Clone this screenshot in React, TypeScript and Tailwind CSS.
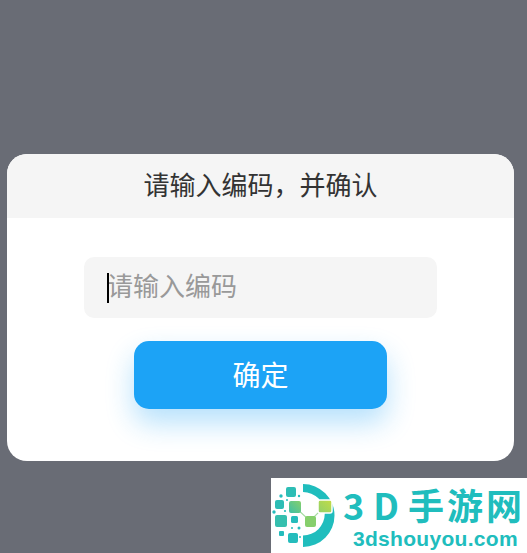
const cjk = "font-['Noto_Sans_CJK_SC','Noto_Sans',sans-serif]";

function Logo() {
  return (
    <svg width="70" height="75" viewBox="0 0 70 75" className="shrink-0">
      <defs>
        <linearGradient id="g1" x1="0" y1="1" x2="1" y2="0">
          <stop offset="0" stopColor="#3fbfa6" />
          <stop offset="1" stopColor="#86cf6c" />
        </linearGradient>
        <linearGradient id="g2" x1="0" y1="1" x2="1" y2="0">
          <stop offset="0" stopColor="#8fd06a" />
          <stop offset="1" stopColor="#c4dc45" />
        </linearGradient>
      </defs>
      <path d="M32 6A31.5 31.5 0 0 1 32 69V57.5A20 20 0 0 0 32 14Z" fill="#20bdbd" />
      <path d="M24 29L39 43L54 28" fill="none" stroke="#a5dca0" strokeWidth="1.2" />
      <rect x="15" y="9" width="10" height="10" rx="2" fill="#2dbdb5" />
      <rect x="4" y="22" width="9" height="9" rx="2" fill="#2dbdb5" />
      <rect x="18" y="23" width="12" height="12" rx="2" fill="url(#g1)" />
      <rect x="47" y="22" width="14" height="13" rx="2" stroke="#fff" strokeWidth="1.5" fill="url(#g2)" />
      <rect x="4" y="37" width="12" height="12" rx="2" fill="#35bfae" />
      <rect x="20" y="38" width="7" height="7" rx="1.5" fill="#25bcbc" />
      <rect x="34" y="38" width="11" height="11" rx="2" fill="#86cf6c" />
      <rect x="17" y="55" width="10" height="10" rx="2" fill="#25bcbc" />
      <rect x="8" y="53" width="5" height="5" rx="1" fill="#25bcbc" />
      <circle cx="10" cy="18" r="1.7" fill="#25bcbc" />
      <circle cx="28" cy="18" r="1.2" fill="#25bcbc" />
      <circle cx="16" cy="22" r="1" fill="#25bcbc" />
      <circle cx="3" cy="34" r="1.7" fill="#25bcbc" />
      <circle cx="14" cy="33" r="1.1" fill="#25bcbc" />
      <circle cx="21" cy="50" r="1" fill="#25bcbc" />
      <circle cx="28" cy="50" r="1.5" fill="#25bcbc" />
      <circle cx="29" cy="59" r="1" fill="#25bcbc" />
    </svg>
  );
}

export default function App() {
  return (
    <div className={`relative h-[553px] w-[527px] overflow-hidden bg-[#696c75] pt-[154px] pl-[7px] pr-[13px] ${cjk}`}>
      <div className="h-[307px] overflow-hidden rounded-[20px] bg-white">
        <div className="flex h-16 items-center justify-center bg-[#f5f5f5] pb-1.5 text-[26px] text-[#333]">
          请输入编码，并确认
        </div>
        <div className="flex flex-col items-center pt-[39px]">
          <div className="relative h-[61px] w-[353px]">
            <input
              placeholder="请输入编码"
              className="h-full w-full rounded-[10px] bg-[#f5f5f5] pb-1.5 pl-[23px] text-[26px] outline-none placeholder:text-[#999]"
            />
            <span className="absolute left-[23px] top-4 h-[30px] w-[1.5px] bg-black" />
          </div>
          <button className="mt-[23px] h-[68px] w-[253px] rounded-[15px] bg-[#1ca3f6] pb-0.5 text-[28px] text-white shadow-[0_14px_28px_rgba(28,163,246,0.32)]">
            确定
          </button>
        </div>
      </div>

      <div className="absolute bottom-0 left-[271px] flex h-[75px] w-[256px] bg-white">
        <Logo />
        <div className="flex flex-col items-start pl-0.5 pt-0.5 text-[#20bdbd]">
          <div className="whitespace-nowrap text-[36px] font-bold leading-[48px] tracking-[3px]">
            <span className="tracking-[9px]">3D</span>手游网
          </div>
          <div className="ml-2.5 whitespace-nowrap font-['Liberation_Sans',sans-serif] text-[21px] font-bold leading-[22px] tracking-[0.3px]">
            3dshouyou.com
          </div>
        </div>
      </div>
    </div>
  );
}
